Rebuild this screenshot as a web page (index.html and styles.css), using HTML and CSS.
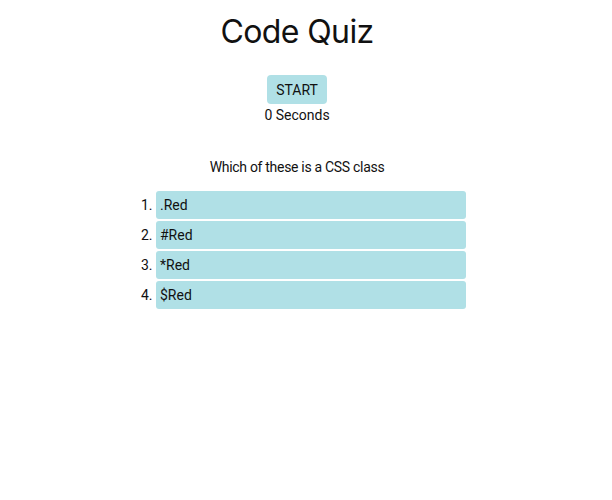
FILE: index.html
```html
<!DOCTYPE html>
<html>
<head>
<meta charset="utf-8">
<link rel="stylesheet" href="styles.css">
</head>
<body>
<main class="quiz">
  <h1 class="title">Code Quiz</h1>
  <button class="start">START</button>
  <div class="timer">0 Seconds</div>
  <p class="question">Which of these is a CSS class</p>
  <ol class="answers">
    <li><span class="answer">.Red</span></li>
    <li><span class="answer">#Red</span></li>
    <li><span class="answer">*Red</span></li>
    <li><span class="answer">$Red</span></li>
  </ol>
</main>
</body>
</html>
```
FILE: styles.css
```css
body {
  margin: 8px 26px 8px 8px;
  font-family: Roboto, Inter, "Noto Sans", sans-serif;
  color: #111;
  background: #fff;
}
.quiz {
  display: flex;
  flex-direction: column;
  align-items: center;
}
.title {
  font-family: Inter, Roboto, sans-serif;
  font-size: 32px;
  font-weight: 400;
  letter-spacing: -0.6px;
  margin: 4px 0 0;
  line-height: 40px;
  color: #111;
}
.start {
  margin-top: 23px;
  width: 60px;
  height: 29px;
  border: none;
  border-radius: 4px;
  background: #b0e0e6;
  font-family: inherit;
  font-size: 14px;
  color: #111;
  padding: 0;
}
.timer {
  font-size: 14px;
  line-height: 20px;
  margin-top: 1px;
}
.question {
  font-size: 14px;
  line-height: 20px;
  letter-spacing: -0.3px;
  margin: 32px 0 0;
}
.answers {
  margin: 14px 0 0;
  padding: 0 0 0 28px;
  width: 310px;
  font-size: 14px;
  display: flex;
  flex-direction: column;
  gap: 2px;
}
.answer {
  display: block;
  height: 28px;
  line-height: 28px;
  background: #b0e0e6;
  border-radius: 3px;
  padding-left: 4px;
}
```
